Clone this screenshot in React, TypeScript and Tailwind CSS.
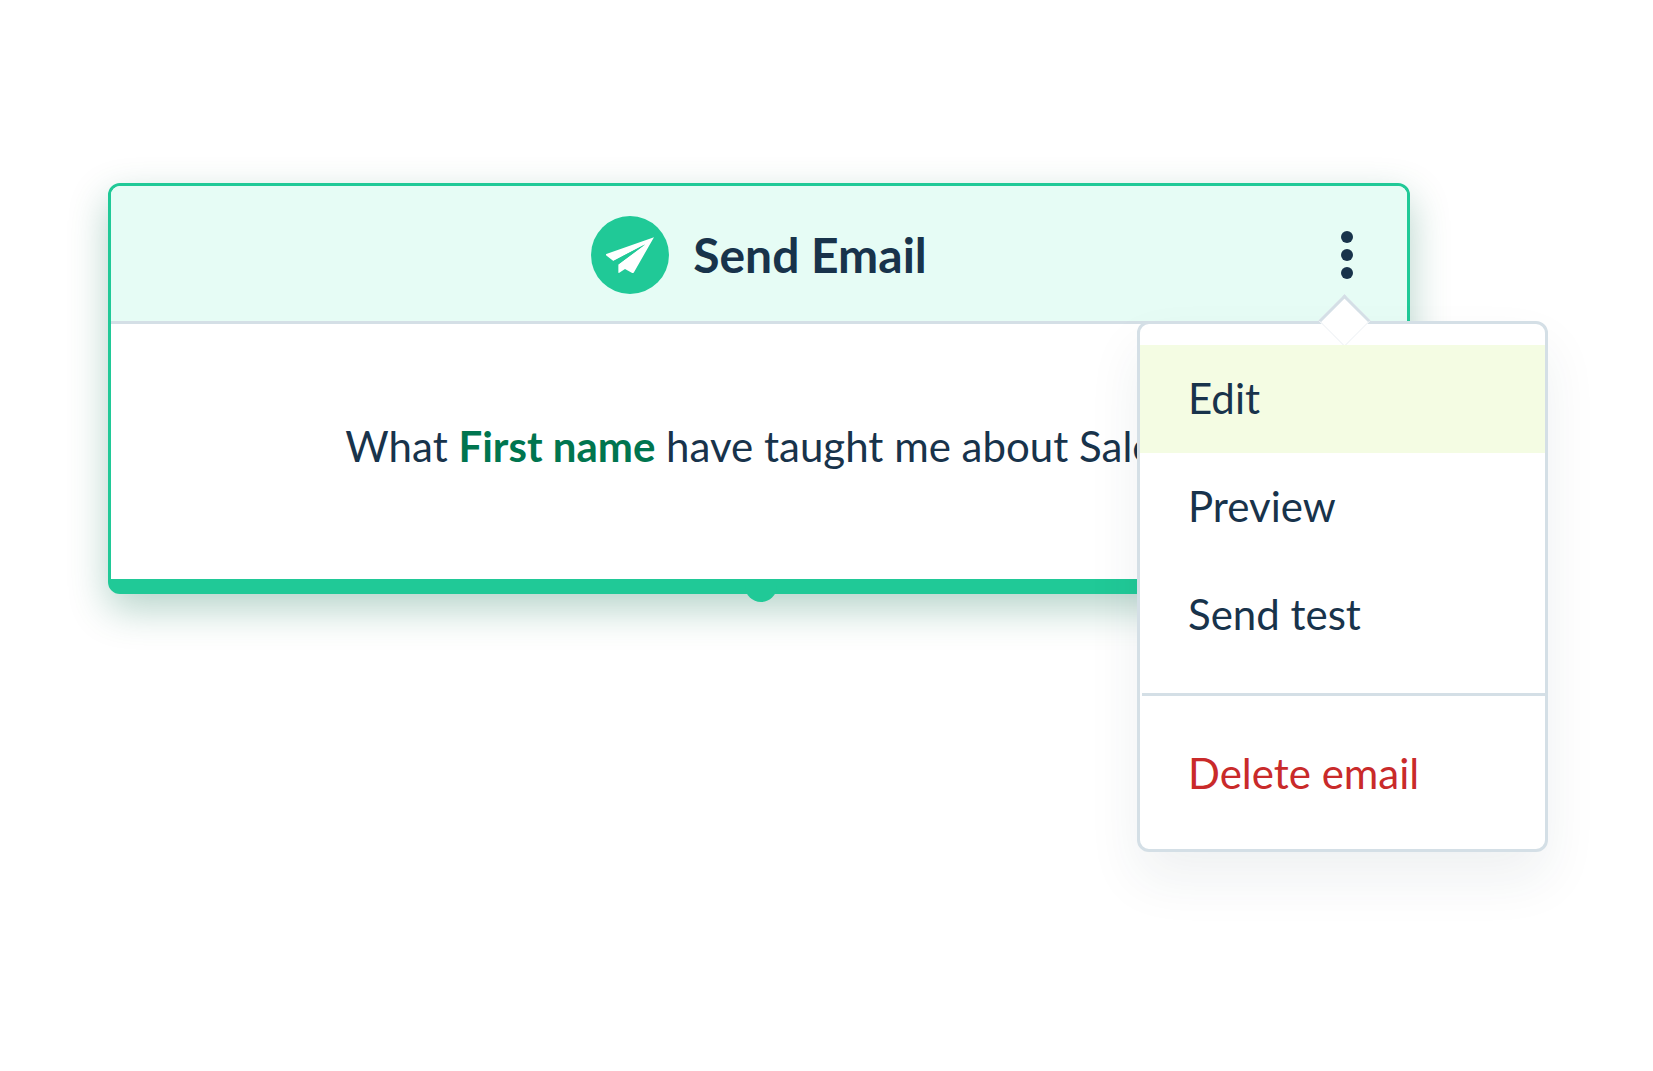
const actions = ["Edit", "Preview", "Send test"];

function PaperPlane() {
  return (
    <svg viewBox="0 0 78 78" className="size-[78px] shrink-0" aria-hidden="true">
      <circle cx="39" cy="39" r="39" fill="#20c997" />
      <path
        fill="#fff"
        d="M63 21.2 15.3 38Q14.6 38.6 15.3 39.4L22.4 45 54.2 28.4 27.2 48.6V56.6Q27.4 57.4 28.3 56.8L34 53 41.2 57Q42.2 57.3 43 56.2Z"
      />
      <path fill="#20c997" d="M22.4 44.9 54.2 28.2 27.2 48.6V60H22Z" />
    </svg>
  );
}

function ActionMenu() {
  return (
    <div
      role="menu"
      aria-label="Email actions"
      className="absolute top-[135px] -right-[141px] w-[411px] rounded-xl border-[3px] border-[#d4dfe6] bg-white py-[21px] shadow-[0_27px_54px_rgba(24,51,75,0.07)]"
    >
      <div className="absolute -top-[22px] right-[182px] size-[37px] rotate-45 border-t-[3px] border-r border-b border-l-[3px] border-t-[#d4dfe6] border-r-[#f0f3f6] border-b-[#f0f3f6] border-l-[#d4dfe6] bg-white" />
      <div className="relative">
        {actions.map((label) => (
          <button
            key={label}
            type="button"
            role="menuitem"
            className="block h-[108px] w-full px-12 pb-0.5 text-left first:bg-[#f4fce3]"
          >
            {label}
          </button>
        ))}
      </div>
      <hr className="my-6 ml-0.5 border-t-[3px] border-[#d4dfe6]" />
      <button
        type="button"
        role="menuitem"
        className="block h-[108px] w-full px-12 pb-0.5 text-left text-[#c92a2a]"
      >
        Delete email
      </button>
    </div>
  );
}

export default function App() {
  return (
    <main className="min-h-screen bg-white pt-[183px] pr-[243px] pb-12 pl-[108px] font-['Lato',sans-serif] text-[42px] leading-[54px] text-[#18334b]">
      <section className="relative rounded-xl border-[3px] border-b-[15px] border-[#20c997] bg-white shadow-[0_15px_39px_rgba(8,108,75,0.3)]">
        <header className="relative flex h-[138px] items-center justify-center gap-6 rounded-t-[9px] border-b-[3px] border-[#d4dfe6] bg-[#e6fcf5] pt-[3px]">
          <PaperPlane />
          <h1 className="text-5xl font-bold">Send Email</h1>
          <button
            type="button"
            aria-label="More actions"
            className="absolute right-11 flex w-8 flex-col items-center gap-1.5 py-2"
          >
            <span className="size-3 rounded-full bg-[#18334b]" />
            <span className="size-3 rounded-full bg-[#18334b]" />
            <span className="size-3 rounded-full bg-[#18334b]" />
          </button>
        </header>
        <p className="flex h-[255px] items-center justify-center pb-3 whitespace-nowrap">
          <span>
            What <strong className="font-bold text-[#00754f]">First name</strong> have taught me about Sales
          </span>
        </p>
        <div className="absolute inset-x-0 -bottom-[23px] flex justify-center pl-[3px]">
          <span className="size-8 rounded-full bg-[#20c997] [clip-path:inset(50%_0_0_0)]" />
        </div>
        <ActionMenu />
      </section>
    </main>
  );
}
